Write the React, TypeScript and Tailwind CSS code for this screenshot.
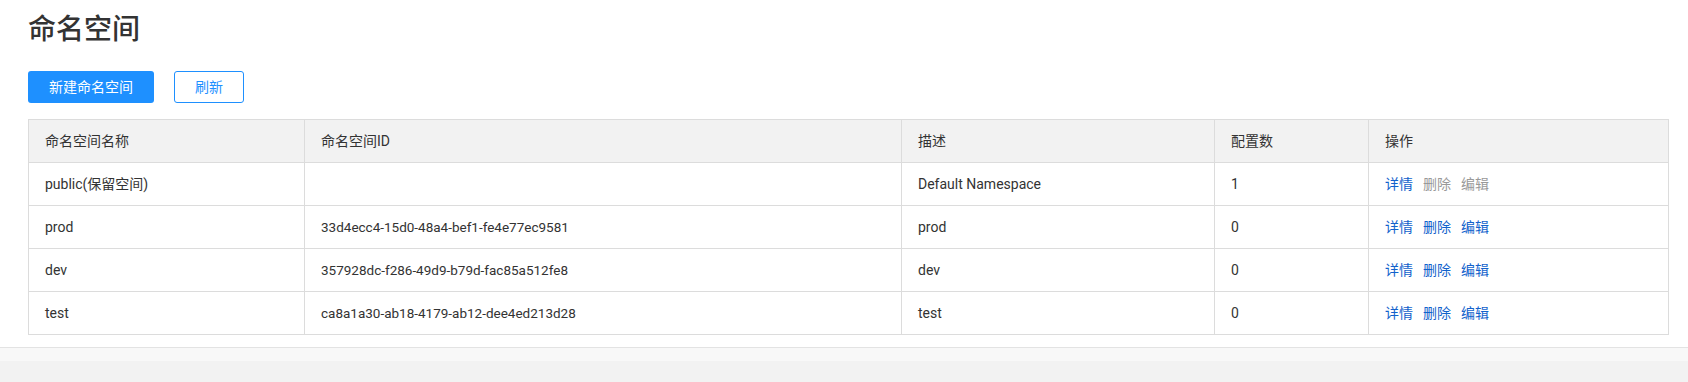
const font = { fontFamily: "Roboto, 'Noto Sans CJK SC', sans-serif" };

const rows = [
  { name: "public(保留空间)", id: "", desc: "Default Namespace", count: 1, reserved: true },
  { name: "prod", id: "33d4ecc4-15d0-48a4-bef1-fe4e77ec9581", desc: "prod", count: 0, reserved: false },
  { name: "dev", id: "357928dc-f286-49d9-b79d-fac85a512fe8", desc: "dev", count: 0, reserved: false },
  { name: "test", id: "ca8a1a30-ab18-4179-ab12-dee4ed213d28", desc: "test", count: 0, reserved: false },
];

export default function App() {
  return (
    <div className="w-[1688px] h-[382px] bg-white flex flex-col text-[#333]" style={font}>
      <div className="pl-[28px] pr-[20px] pt-[10px]">
        <h1 className="text-[28px] leading-[40px] font-medium text-[#333]">命名空间</h1>
        <div className="mt-[21px] flex gap-[20px]">
          <button className="w-[126px] h-[32px] rounded-[3px] bg-[#1e90ff] text-white text-[14px]">新建命名空间</button>
          <button className="w-[70px] h-[32px] rounded-[3px] border border-[#1e90ff] bg-white text-[#1e90ff] text-[14px]">刷新</button>
        </div>
        <table className="mt-[16px] w-[1640px] table-fixed border-collapse text-[14px]">
          <colgroup>
            <col className="w-[276px]" />
            <col className="w-[597px]" />
            <col className="w-[313px]" />
            <col className="w-[154px]" />
            <col className="w-[300px]" />
          </colgroup>
          <thead>
            <tr className="h-[43px] bg-[#f2f2f2]">
              {["命名空间名称", "命名空间ID", "描述", "配置数", "操作"].map((h) => (
                <th key={h} className="border border-[#dcdcdc] px-[16px] text-left font-normal text-[#333]">{h}</th>
              ))}
            </tr>
          </thead>
          <tbody>
            {rows.map((r) => (
              <tr key={r.name} className="h-[43px]">
                <td className="border border-[#dcdcdc] px-[16px]">{r.name}</td>
                <td className="border border-[#dcdcdc] px-[16px] text-[13.5px]">{r.id}</td>
                <td className="border border-[#dcdcdc] px-[16px]">{r.desc}</td>
                <td className="border border-[#dcdcdc] px-[16px]">{r.count}</td>
                <td className="border border-[#dcdcdc] px-[16px]">
                  <div className="flex gap-[10px]">
                    <span className="text-[#1262cc]">详情</span>
                    <span className={r.reserved ? "text-[#999]" : "text-[#1262cc]"}>删除</span>
                    <span className={r.reserved ? "text-[#999]" : "text-[#1262cc]"}>编辑</span>
                  </div>
                </td>
              </tr>
            ))}
          </tbody>
        </table>
      </div>
      <div className="mt-[12px] flex-1 flex flex-col border-t border-[#e3e3e3]">
        <div className="h-[13px] bg-[#f8f8f8]" />
        <div className="flex-1 bg-[#f2f2f2]" />
      </div>
    </div>
  );
}
